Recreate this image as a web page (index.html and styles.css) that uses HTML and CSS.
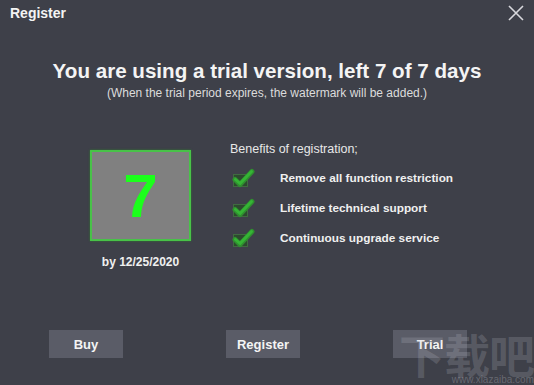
FILE: index.html
```html
<!DOCTYPE html>
<html>
<head>
<meta charset="utf-8">
<link rel="stylesheet" href="styles.css">
</head>
<body>
<div class="window">
  <div class="titlebar">
    <span class="title">Register</span>
    <svg class="close" width="16" height="16" viewBox="0 0 16 16"><path d="M1 1L15 15M15 1L1 15" stroke="#d8d8dc" stroke-width="1.6" fill="none"/></svg>
  </div>
  <h1 class="headline">You are using a trial version, left 7 of 7 days</h1>
  <p class="sub">(When the trial period expires, the watermark will be added.)</p>
  <div class="main">
    <div class="left">
      <div class="daybox">7</div>
      <div class="bydate">by 12/25/2020</div>
    </div>
    <div class="right">
      <div class="benefits-title">Benefits of registration;</div>
      <ul class="benefits">
        <li><svg class="check" width="24" height="20" viewBox="0 0 24 20"><rect x="1.5" y="6.5" width="14" height="12" fill="#2d4a2f" stroke="#3f6b40"/><path d="M3 11.5L8 16.5L20 3.5" stroke="#2f8f2f" stroke-width="5" fill="none" stroke-linecap="round" stroke-linejoin="round"/><path d="M3.5 11.5L8 15.5L19.5 3.5" stroke="#35b535" stroke-width="3" fill="none" stroke-linecap="round" stroke-linejoin="round"/></svg><span>Remove all function restriction</span></li>
        <li><svg class="check" width="24" height="20" viewBox="0 0 24 20"><rect x="1.5" y="6.5" width="14" height="12" fill="#2d4a2f" stroke="#3f6b40"/><path d="M3 11.5L8 16.5L20 3.5" stroke="#2f8f2f" stroke-width="5" fill="none" stroke-linecap="round" stroke-linejoin="round"/><path d="M3.5 11.5L8 15.5L19.5 3.5" stroke="#35b535" stroke-width="3" fill="none" stroke-linecap="round" stroke-linejoin="round"/></svg><span>Lifetime technical support</span></li>
        <li><svg class="check" width="24" height="20" viewBox="0 0 24 20"><rect x="1.5" y="6.5" width="14" height="12" fill="#2d4a2f" stroke="#3f6b40"/><path d="M3 11.5L8 16.5L20 3.5" stroke="#2f8f2f" stroke-width="5" fill="none" stroke-linecap="round" stroke-linejoin="round"/><path d="M3.5 11.5L8 15.5L19.5 3.5" stroke="#35b535" stroke-width="3" fill="none" stroke-linecap="round" stroke-linejoin="round"/></svg><span>Continuous upgrade service</span></li>
      </ul>
    </div>
  </div>
  <div class="buttons">
    <button class="btn">Buy</button>
    <button class="btn">Register</button>
    <button class="btn">Trial</button>
  </div>
  <div class="watermark">
    <span class="wm-logo">下载吧</span>
    <span class="wm-url">www.xiazaiba.com</span>
  </div>
</div>
</body>
</html>
```
FILE: styles.css
```css
html, body {
  margin: 0;
  padding: 0;
  background: #3e4049;
}
.window {
  position: relative;
  width: 534px;
  height: 385px;
  background: #3e4049;
  font-family: "Liberation Sans", Arial, sans-serif;
  color: #f2f2f2;
  display: flex;
  flex-direction: column;
  overflow: hidden;
}
.titlebar {
  height: 26px;
  display: flex;
  align-items: center;
  justify-content: space-between;
  padding: 0 10px 0 10px;
}
.title {
  font-weight: bold;
  font-size: 14px;
  color: #f4f4f4;
}
.headline {
  margin: 33px 0 0 0;
  font-size: 20.6px;
  font-weight: bold;
  text-align: center;
  color: #f4f4f4;
  line-height: 24px;
}
.sub {
  margin: 3px 0 0 0;
  font-size: 12px;
  text-align: center;
  color: #dcdcdc;
  line-height: 15px;
}
.main {
  display: flex;
  margin-top: 41px;
  padding-left: 90px;
}
.left {
  width: 101px;
  display: flex;
  flex-direction: column;
  align-items: center;
  margin-top: 8px;
}
.daybox {
  width: 97px;
  height: 87px;
  border: 2px solid #48c248;
  background: #808080;
  color: #1bff1b;
  font-size: 62px;
  font-weight: bold;
  display: flex;
  align-items: center;
  justify-content: center;
  line-height: 1;
  box-shadow: 0 0 2px #2e7a2e;
}
.bydate {
  margin-top: 14px;
  font-size: 12px;
  font-weight: bold;
  color: #f0f0f0;
  white-space: nowrap;
}
.right {
  margin-left: 39px;
}
.benefits-title {
  font-size: 12.5px;
  color: #e8e8e8;
  line-height: 14px;
}
.benefits {
  list-style: none;
  margin: 12px 0 0 0;
  padding: 0;
  display: flex;
  flex-direction: column;
  gap: 10px;
}
.benefits li {
  display: flex;
  align-items: center;
  height: 20px;
}
.check {
  margin-left: 2px;
  flex: none;
}
.benefits span {
  margin-left: 24px;
  font-size: 11.8px;
  font-weight: bold;
  color: #f0f0f0;
}
.buttons {
  display: flex;
  margin-top: 61px;
  padding-left: 49px;
  gap: 103px;
}
.btn {
  width: 74px;
  height: 28px;
  border: none;
  background: #5a5c67;
  color: #f4f4f4;
  font-family: "Liberation Sans", Arial, sans-serif;
  font-size: 13px;
  font-weight: bold;
  padding: 0;
}
.buttons .btn:nth-child(3) {
  margin-left: -10px;
}
.watermark {
  position: absolute;
  left: 392px;
  top: 331px;
  width: 142px;
  display: flex;
  flex-direction: column;
  align-items: flex-end;
  pointer-events: none;
}
.wm-logo {
  font-family: "Noto Sans CJK SC", sans-serif;
  font-size: 46px;
  line-height: 44px;
  color: rgba(200, 200, 210, 0.2);
  font-weight: bold;
  letter-spacing: -1px;
}
.wm-url {
  font-family: "Liberation Sans", Arial, sans-serif;
  font-size: 10px;
  line-height: 10px;
  color: rgba(200, 200, 210, 0.3);
}
```
